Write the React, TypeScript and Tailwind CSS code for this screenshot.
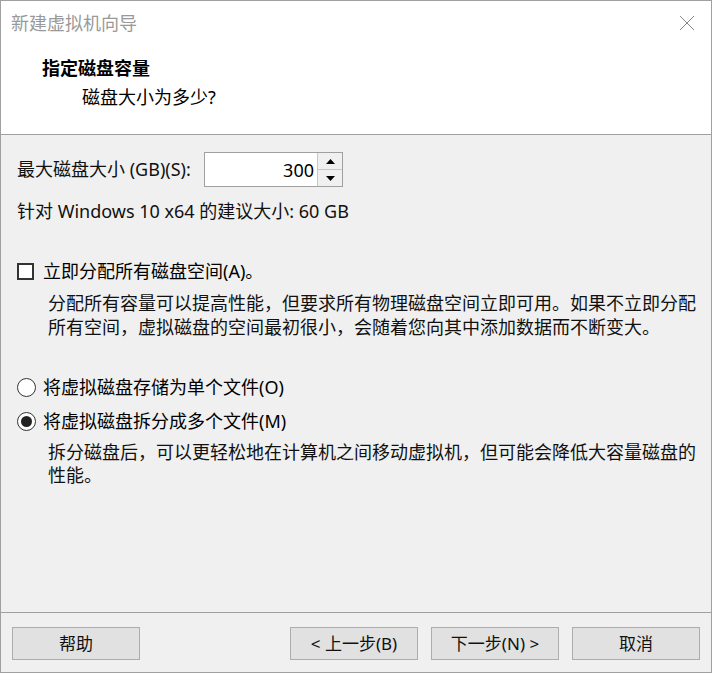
const font = "font-['Noto_Sans','Noto_Sans_CJK_SC',sans-serif]";

function WizardButton({ label }: { label: string }) {
  return (
    <button className="w-[128px] h-[33px] bg-[#e1e1e1] border border-[#adadad] text-[17px] text-[#111] leading-none">
      {label}
    </button>
  );
}

export default function App() {
  return (
    <div
      className={`w-[712px] h-[673px] border border-[#a0a0a0] bg-[#f0f0f0] flex flex-col text-black ${font}`}
    >
      <header className="bg-white h-[134px] border-b border-[#a0a0a0] flex flex-col">
        <div className="h-[44px] flex items-center justify-between pl-[10px] pr-[16px]">
          <p className="text-[18px] text-[#999999]">新建虚拟机向导</p>
          <svg width="16" height="16" viewBox="0 0 16 16" className="text-[#888]">
            <path d="M1 1 L15 15 M15 1 L1 15" stroke="currentColor" strokeWidth="1" />
          </svg>
        </div>
        <p className="mt-[11px] pl-[41px] text-[18px] leading-[24px] font-bold">
          指定磁盘容量
        </p>
        <p className="mt-[5px] pl-[81px] text-[18px] leading-[24px]">
          磁盘大小为多少?
        </p>
      </header>

      <main className="flex-1 pl-[16px] text-[18px] whitespace-nowrap">
        <div className="mt-[17px] flex items-center h-[35px]">
          <label className="w-[187px] text-[#111]">最大磁盘大小 (GB)(S):</label>
          <div className="flex h-[35px] border border-[#a0a0a0] bg-white">
            <input
              readOnly
              value="300"
              className="w-[112px] h-full text-right pr-[3px] outline-none text-[18px]"
            />
            <div className="w-[25px] flex flex-col border-l border-[#c8c8c8] bg-[#f0f0f0]">
              <span className="flex-1 flex items-center justify-center border-b border-[#c8c8c8]">
                <svg width="9" height="5" viewBox="0 0 9 5">
                  <path d="M0 5 L4.5 0 L9 5 Z" fill="#000" />
                </svg>
              </span>
              <span className="flex-1 flex items-center justify-center">
                <svg width="9" height="5" viewBox="0 0 9 5">
                  <path d="M0 0 L4.5 5 L9 0 Z" fill="#000" />
                </svg>
              </span>
            </div>
          </div>
        </div>

        <p className="mt-[12px] leading-[24px] text-[#111]">
          针对 Windows 10 x64 的建议大小: 60 GB
        </p>

        <div className="mt-[36px] flex items-center gap-[9px] leading-[24px]">
          <span className="w-[17px] h-[17px] border-2 border-[#333] bg-white" />
          <span>立即分配所有磁盘空间(A)。</span>
        </div>
        <p className="mt-[8px] pl-[31px] leading-[24px] text-[#111]">
          分配所有容量可以提高性能，但要求所有物理磁盘空间立即可用。如果不立即分配
          <br />
          所有空间，虚拟磁盘的空间最初很小，会随着您向其中添加数据而不断变大。
        </p>

        <div className="mt-[36px] flex items-center gap-[7px] leading-[24px]">
          <span className="w-[19px] h-[19px] rounded-full border border-[#333] bg-white" />
          <span>将虚拟磁盘存储为单个文件(O)</span>
        </div>
        <div className="mt-[10px] flex items-center gap-[7px] leading-[24px]">
          <span className="w-[19px] h-[19px] rounded-full border border-[#333] bg-white flex items-center justify-center">
            <span className="w-[11px] h-[11px] rounded-full bg-[#222]" />
          </span>
          <span>将虚拟磁盘拆分成多个文件(M)</span>
        </div>
        <p className="mt-[8px] pl-[31px] leading-[23px] text-[#111]">
          拆分磁盘后，可以更轻松地在计算机之间移动虚拟机，但可能会降低大容量磁盘的
          <br />
          性能。
        </p>
      </main>

      <footer className="h-[60px] border-t border-[#a0a0a0] flex items-start pt-[14px] px-[11px] gap-[13px]">
        <WizardButton label="帮助" />
        <div className="flex-1" />
        <WizardButton label="< 上一步(B)" />
        <WizardButton label="下一步(N) >" />
        <WizardButton label="取消" />
      </footer>
    </div>
  );
}
